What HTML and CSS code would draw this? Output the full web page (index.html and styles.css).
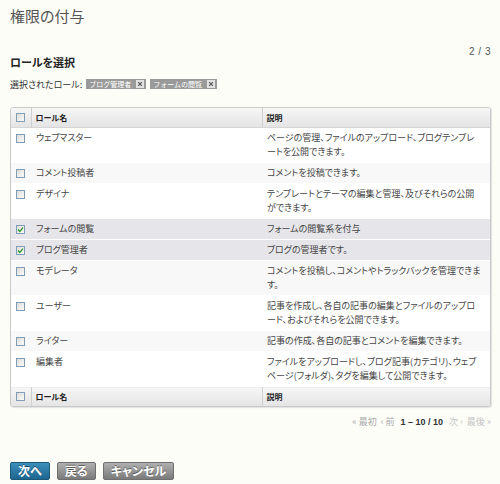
FILE: index.html
```html
<!DOCTYPE html>
<html lang="ja">
<head>
<meta charset="utf-8">
<title>権限の付与</title>
<link rel="stylesheet" href="styles.css">
</head>
<body>
<div class="page">
  <h1 class="title">権限の付与</h1>
  <div class="step">2 / 3</div>
  <h2 class="section">ロールを選択</h2>
  <div class="selected">
    <span class="selected-label">選択されたロール:</span>
    <span class="tag">ブログ管理者<span class="tag-x"><svg viewBox="0 0 8 8" width="8" height="8"><path d="M2.2 2.2 L5.8 5.8 M5.8 2.2 L2.2 5.8" stroke="#555" stroke-width="1.2"/></svg></span></span>
    <span class="tag">フォームの閲覧<span class="tag-x"><svg viewBox="0 0 8 8" width="8" height="8"><path d="M2.2 2.2 L5.8 5.8 M5.8 2.2 L2.2 5.8" stroke="#555" stroke-width="1.2"/></svg></span></span>
  </div>

  <div class="grid">
    <table class="roles">
      <colgroup><col class="c-check"><col class="c-name"><col class="c-desc"></colgroup>
      <thead>
        <tr><th class="cb"><span class="box"></span></th><th>ロール名</th><th>説明</th></tr>
      </thead>
      <tbody>
        <tr><td class="cb"><span class="box"></span></td><td>ウェブマスター</td><td class="desc">ページの管理、ファイルのアップロード、ブログテンプレ<br>ートを公開できます。</td></tr>
        <tr class="even"><td class="cb"><span class="box"></span></td><td>コメント投稿者</td><td class="desc">コメントを投稿できます。</td></tr>
        <tr><td class="cb"><span class="box"></span></td><td>デザイナ</td><td class="desc">テンプレートとテーマの編集と管理、及びそれらの公開<br>ができます。</td></tr>
        <tr class="sel"><td class="cb"><span class="box on"><svg viewBox="0 0 9 9" width="9" height="9"><path d="M2 4.6 L3.8 6.4 L7 2.6" fill="none" stroke="#2e9a2e" stroke-width="1.4"/></svg></span></td><td>フォームの閲覧</td><td class="desc">フォームの閲覧系を付与</td></tr>
        <tr class="sel"><td class="cb"><span class="box on"><svg viewBox="0 0 9 9" width="9" height="9"><path d="M2 4.6 L3.8 6.4 L7 2.6" fill="none" stroke="#2e9a2e" stroke-width="1.4"/></svg></span></td><td>ブログ管理者</td><td class="desc">ブログの管理者です。</td></tr>
        <tr class="even"><td class="cb"><span class="box"></span></td><td>モデレータ</td><td class="desc">コメントを投稿し、コメントやトラックバックを管理できま<br>す。</td></tr>
        <tr><td class="cb"><span class="box"></span></td><td>ユーザー</td><td class="desc">記事を作成し、各自の記事の編集とファイルのアップロ<br>ード、およびそれらを公開できます。</td></tr>
        <tr class="even"><td class="cb"><span class="box"></span></td><td>ライター</td><td class="desc">記事の作成、各自の記事とコメントを編集できます。</td></tr>
        <tr><td class="cb"><span class="box"></span></td><td>編集者</td><td class="desc">ファイルをアップロードし、ブログ記事(カテゴリ)、ウェブ<br>ページ(フォルダ)、タグを編集して公開できます。</td></tr>
      </tbody>
      <tfoot>
        <tr><th class="cb"><span class="box"></span></th><th>ロール名</th><th>説明</th></tr>
      </tfoot>
    </table>
  </div>

  <div class="pager">
    <span class="p-off">« 最初</span>
    <span class="p-off">‹ 前</span>
    <span class="p-range">1 – 10 / 10</span>
    <span class="p-off light">次 ›</span>
    <span class="p-off light">最後 »</span>
  </div>

  <div class="actions">
    <button class="btn primary">次へ</button>
    <button class="btn">戻る</button>
    <button class="btn">キャンセル</button>
  </div>
</div>
</body>
</html>
```

FILE: styles.css
```css
html, body {
  margin: 0;
  padding: 0;
  background: #fdfdf8;
}

body {
  font-family: "Noto Sans CJK JP", "Liberation Sans", sans-serif;
  font-feature-settings: "palt";
  color: #444;
  font-size: 9px;
}

.page {
  padding: 0 9px 0 10px;
}

.title {
  margin: 6px 0 0;
  font-size: 15px;
  line-height: 20px;
  font-weight: normal;
  color: #555;
}

.step {
  margin-top: 21px;
  text-align: right;
  font-family: "Liberation Sans", sans-serif;
  font-size: 10px;
  line-height: 10px;
  color: #555;
  letter-spacing: 0.5px;
}

.section {
  margin: 0;
  font-size: 11px;
  line-height: 11px;
  font-weight: bold;
  color: #222;
}

.selected {
  margin-top: 10px;
  display: flex;
  align-items: center;
  gap: 4px;
  height: 12px;
}

.selected-label {
  font-size: 9px;
  color: #333;
}

.tag {
  display: inline-flex;
  align-items: center;
  gap: 5px;
  height: 10px;
  padding: 0 2px 0 3px;
  background: #9a9a9a;
  color: #fff;
  font-size: 7px;
  line-height: 10px;
  font-feature-settings: normal;
}

.tag-x {
  display: inline-flex;
  width: 8px;
  height: 8px;
  background: #e2e2e2;
}

.grid {
  margin-top: 17px;
  border: 1px solid #c9c9c9;
  border-radius: 3px;
  box-shadow: 1px 1px 1px #e2e2e2;
  overflow: hidden;
  background: #fff;
}

.roles {
  width: 100%;
  border-collapse: collapse;
  table-layout: fixed;
}

.c-check { width: 20px; }
.c-name { width: 231px; }

.roles th {
  height: 19px;
  padding: 0 4px;
  text-align: left;
  font-size: 8px;
  font-weight: bold;
  color: #222;
  background: linear-gradient(#f6f6f6, #e4e4e4);
  border-left: 1px solid #cfcfcf;
}

.roles thead th {
  border-bottom: 1px solid #d6d6d6;
}

.roles tfoot th {
  height: 19px;
  border-top: 1px solid #d6d6d6;
}

.roles th.cb {
  border-left: none;
}

.roles td {
  padding: 3px 4px;
  line-height: 14px;
  vertical-align: top;
  border-bottom: 1px solid #fff;
  color: #444;
}

.roles td.desc {
  white-space: nowrap;
  padding-left: 5px;
}

.roles td:nth-child(2) {
  padding-left: 5px;
}

.roles .cb {
  padding: 0 0 0 5px;
}

.roles td.cb {
  padding-top: 6px;
}

.roles tr.even td { background: #f8f8f8; }
.roles tr.sel td { background: #e6e6ea; }

.box {
  display: block;
  box-sizing: border-box;
  width: 9px;
  height: 9px;
  border: 1px solid #7f9db9;
  background: linear-gradient(135deg, #dcdcd7, #fbfbf9);
  position: relative;
}

.box svg {
  position: absolute;
  left: -1px;
  top: -1px;
}

.pager {
  margin-top: 9px;
  display: flex;
  justify-content: flex-end;
  gap: 4px;
  line-height: 12px;
  font-size: 9px;
  color: #aaa;
}

.p-range {
  font-family: "Liberation Sans", sans-serif;
  font-weight: bold;
  color: #333;
  margin: 0 2px;
}

.p-off.light {
  color: #c4c4c4;
}

.actions {
  margin-top: 34px;
  display: flex;
  gap: 7px;
}

.btn {
  height: 18px;
  padding: 0 7px;
  border: 1px solid #6f6f6f;
  border-radius: 2px;
  background: linear-gradient(#b0b0b0, #7a7a7a);
  color: #fff;
  font-family: "Noto Sans CJK JP", sans-serif;
  font-feature-settings: "palt";
  font-size: 12px;
  font-weight: bold;
  line-height: 16px;
  text-shadow: 0 -1px 0 rgba(0, 0, 0, 0.45);
}

.btn.primary {
  border-color: #1b5878;
  background: linear-gradient(#3d8fbb, #1c6690);
}
```
